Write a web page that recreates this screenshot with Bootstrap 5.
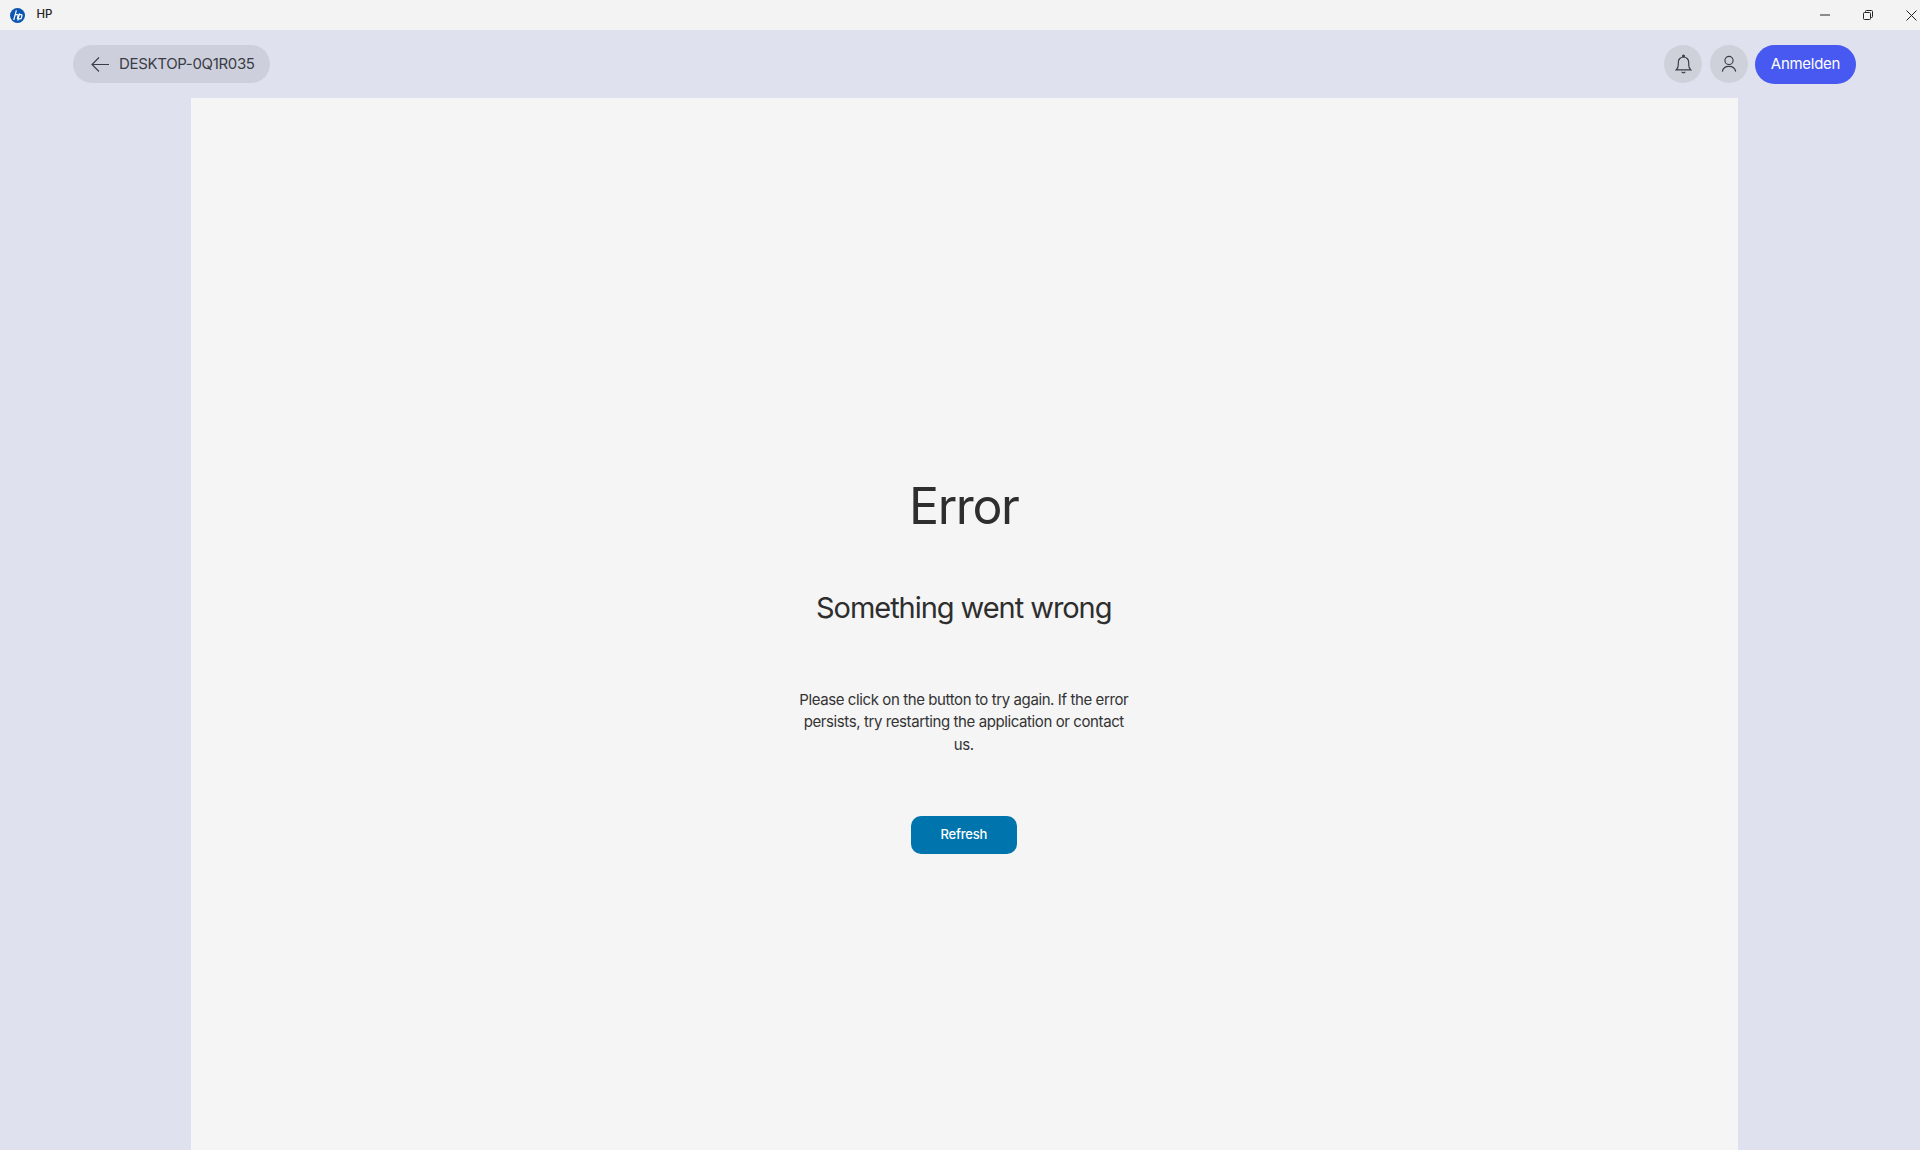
<!DOCTYPE html>
<html lang="de">
<head>
<meta charset="utf-8">
<title>HP</title>
<link href="https://cdn.jsdelivr.net/npm/bootstrap@5.3.0/dist/css/bootstrap.min.css" rel="stylesheet">
<style>
html,body{height:100%;overflow:hidden}
body{background:#dfe1ee;font-family:"Inter","Liberation Sans",sans-serif;color:#2e2e2e}
.app-shell{height:1150px}
.title-strip{height:30px;background:#f3f3f3;flex:none}
.win-logo{margin-left:10px;width:15px;height:15px}
.win-name{font-size:11.500px;margin-left:11.500px;color:#222;font-weight:500}
.win-ctls{gap:33px;padding-right:3px;color:#222}
.top-strip{height:68px;flex:none;padding:0 64px 0 73px}
.pill-back{height:38px;width:197px;background:#cdd0dc;border-radius:19px;color:#3a3c46;font-size:15px;padding-left:18px;gap:10px;letter-spacing:-.33px}
.pill-round{width:38px;height:38px;border-radius:50%;background:#cfd1da;color:#3a3c46}
.pill-login{height:39px;width:101px;border:0;border-radius:20px;background:#4759f0;color:#fff;font-size:15px;font-weight:400;letter-spacing:-.28px;padding-top:1px!important}
.right-group{gap:7.500px}
.sheet{margin:0 182px 0 191px;background:#f5f5f5;flex:1 1 auto;padding:376px 1.500px 0 0}
.err-h{font-size:50px;line-height:64px;font-weight:400;color:#2e2e2e;letter-spacing:-1.400px;margin:0}
.err-sub{font-size:29px;line-height:40px;font-weight:400;color:#2e2e2e;letter-spacing:-1.050px;margin:50px 0 0}
.err-txt{font-size:15px;line-height:22.700px;width:340px;color:#333;margin:60.500px 0 0;letter-spacing:-.4px}
.err-btn{width:106px;height:38px;background:#0075ad;border:0;border-radius:10px;color:#fff;font-size:13px;font-weight:500;letter-spacing:-.2px;margin-top:59.500px}
</style>
</head>
<body>
<div class="app-shell d-flex flex-column">
  <div class="title-strip d-flex align-items-center">
    <svg class="win-logo" viewBox="0 0 16 16" aria-hidden="true"><circle cx="8" cy="8" r="8" fill="#0a56b0"/><path d="M6.800 2.600 4 12.800M5.500 7h2.300c.7 0 1 .4.800 1.100l-.9 3.500M10.200 5.800 8.200 13.400M9.900 7h2c.7 0 1 .4.800 1.100l-.5 2.300c-.2.800-.6 1.200-1.400 1.200H9" fill="none" stroke="#fff" stroke-width="1.300"/></svg>
    <span class="win-name">HP</span>
    <div class="win-ctls ms-auto d-flex align-items-center">
      <svg width="10" height="10" viewBox="0 0 10 10"><path d="M0 5h10" stroke="currentColor" stroke-width="1"/></svg>
      <svg width="10" height="10" viewBox="0 0 10 10" fill="none" stroke="currentColor"><rect x=".5" y="2.500" width="7" height="7" rx="1"/><path d="M2.500 2.500V1.500a1 1 0 0 1 1-1h5a1 1 0 0 1 1 1v5a1 1 0 0 1-1 1h-1"/></svg>
      <svg width="11" height="11" viewBox="0 0 11 11"><path d="M.5.500l10 10M10.500.500l-10 10" stroke="currentColor"/></svg>
    </div>
  </div>
  <div class="top-strip d-flex align-items-center justify-content-between">
    <div class="pill-back d-flex align-items-center">
      <svg width="18" height="15" viewBox="0 0 18 15" fill="none" stroke="currentColor" stroke-width="1.100"><path d="M18 7.500H1M8 .5 1 7.500l7 7"/></svg>
      <span>DESKTOP-0Q1R035</span>
    </div>
    <div class="right-group d-flex align-items-center">
      <div class="pill-round d-flex align-items-center justify-content-center">
        <svg width="17" height="20" viewBox="0 0 18 22" fill="none" stroke="currentColor" stroke-width="1.300"><path d="M1 17.500h16c-1.700-1.600-2.300-3.200-2.300-6V9a5.700 5.700 0 0 0-11.400 0v2.500c0 2.800-.6 4.400-2.300 6Z"/><circle cx="9" cy="2.300" r="1" fill="currentColor"/><path d="M7 19.500a2.300 2.300 0 0 0 4 0"/></svg>
      </div>
      <div class="pill-round d-flex align-items-center justify-content-center">
        <svg width="16" height="18" viewBox="0 0 18 20" fill="none" stroke="currentColor" stroke-width="1.300"><circle cx="9" cy="6" r="4.600"/><path d="M1.500 18.500c.6-3.700 3.600-5.800 7.500-5.800s6.900 2.100 7.500 5.800"/></svg>
      </div>
      <button type="button" class="btn pill-login p-0">Anmelden</button>
    </div>
  </div>
  <main class="sheet d-flex flex-column align-items-center text-center">
    <h1 class="err-h">Error</h1>
    <h2 class="err-sub">Something went wrong</h2>
    <p class="err-txt">Please click on the button to try again. If the error persists, try restarting the application or contact us.</p>
    <button type="button" class="btn err-btn p-0">Refresh</button>
  </main>
</div>
<script src="https://cdn.jsdelivr.net/npm/bootstrap@5.3.0/dist/js/bootstrap.bundle.min.js"></script>
</body>
</html>
